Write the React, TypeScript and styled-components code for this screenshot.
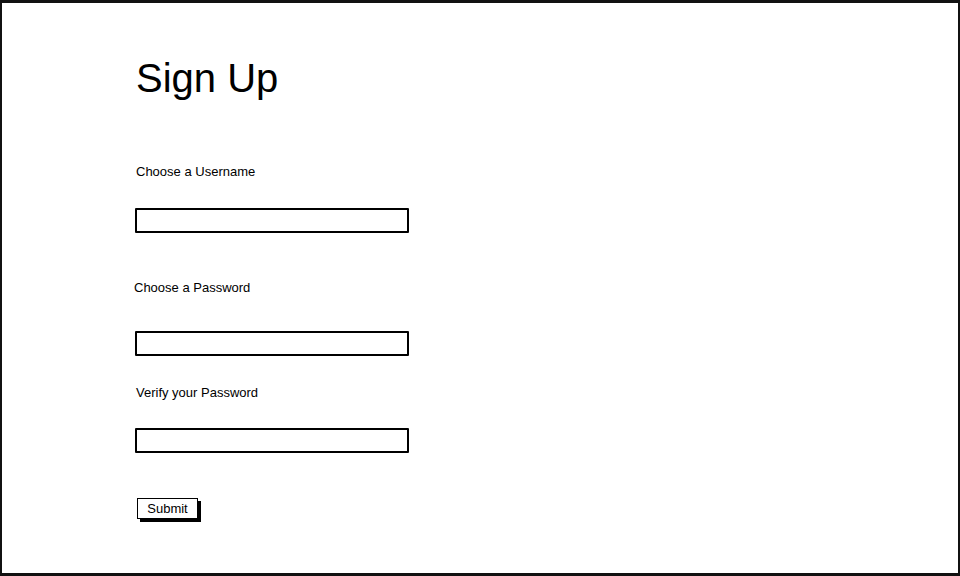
import styled, { createGlobalStyle } from "styled-components";

const GlobalStyle = createGlobalStyle`
  html, body {
    margin: 0;
    padding: 0;
    background: #fff;
  }
  body {
    font-family: "Liberation Sans", Arial, sans-serif;
    color: #000;
  }
`;

const fields = [
  { label: "Choose a Username", labelTop: 63, inputTop: 28, shift: 0 },
  { label: "Choose a Password", labelTop: 47, inputTop: 35, shift: -2 },
  { label: "Verify your Password", labelTop: 29, inputTop: 27, shift: 0 },
];

export default function App() {
  return (
    <>
      <GlobalStyle />
      <Frame>
        <Form onSubmit={(e) => e.preventDefault()}>
          <Title>Sign Up</Title>
          {fields.map(({ label, labelTop, inputTop, shift }) => (
            <Field key={label}>
              <Label top={labelTop} shift={shift}>
                {label}
              </Label>
              <Input top={inputTop} type="text" />
            </Field>
          ))}
          <Submit type="submit">Submit</Submit>
        </Form>
      </Frame>
    </>
  );
}

const Frame = styled.div`
  box-sizing: border-box;
  width: 960px;
  height: 576px;
  border: 2px solid #111;
  border-top-width: 3px;
  border-bottom-width: 3px;
  background: #fff;
`;

const Form = styled.form`
  display: flex;
  flex-direction: column;
  align-items: flex-start;
  padding-left: 131px;
`;

const Title = styled.h1`
  margin: 52px 0 0 3px;
  font-size: 40px;
  line-height: 46px;
  font-weight: normal;
`;

const Field = styled.div`
  display: flex;
  flex-direction: column;
  align-items: flex-start;
`;

const Label = styled.label<{ top: number; shift: number }>`
  margin-top: ${(p) => p.top}px;
  margin-left: ${(p) => 3 + p.shift}px;
  font-size: 13px;
  line-height: 16px;
`;

const Input = styled.input<{ top: number }>`
  box-sizing: border-box;
  margin: ${(p) => p.top}px 0 0 2px;
  width: 274px;
  height: 25px;
  padding: 0 4px;
  border: 2px solid #000;
  border-radius: 1px;
  background: #fff;
  outline: none;
  font: 13px "Liberation Sans", Arial, sans-serif;
`;

const Submit = styled.button`
  box-sizing: border-box;
  margin: 45px 0 0 4px;
  width: 61px;
  height: 21px;
  padding: 0;
  border: 1.5px solid #000;
  background: #fff;
  box-shadow: 3px 3px 0 #000;
  font: 13px "Liberation Sans", Arial, sans-serif;
  color: #000;
  cursor: pointer;
`;
